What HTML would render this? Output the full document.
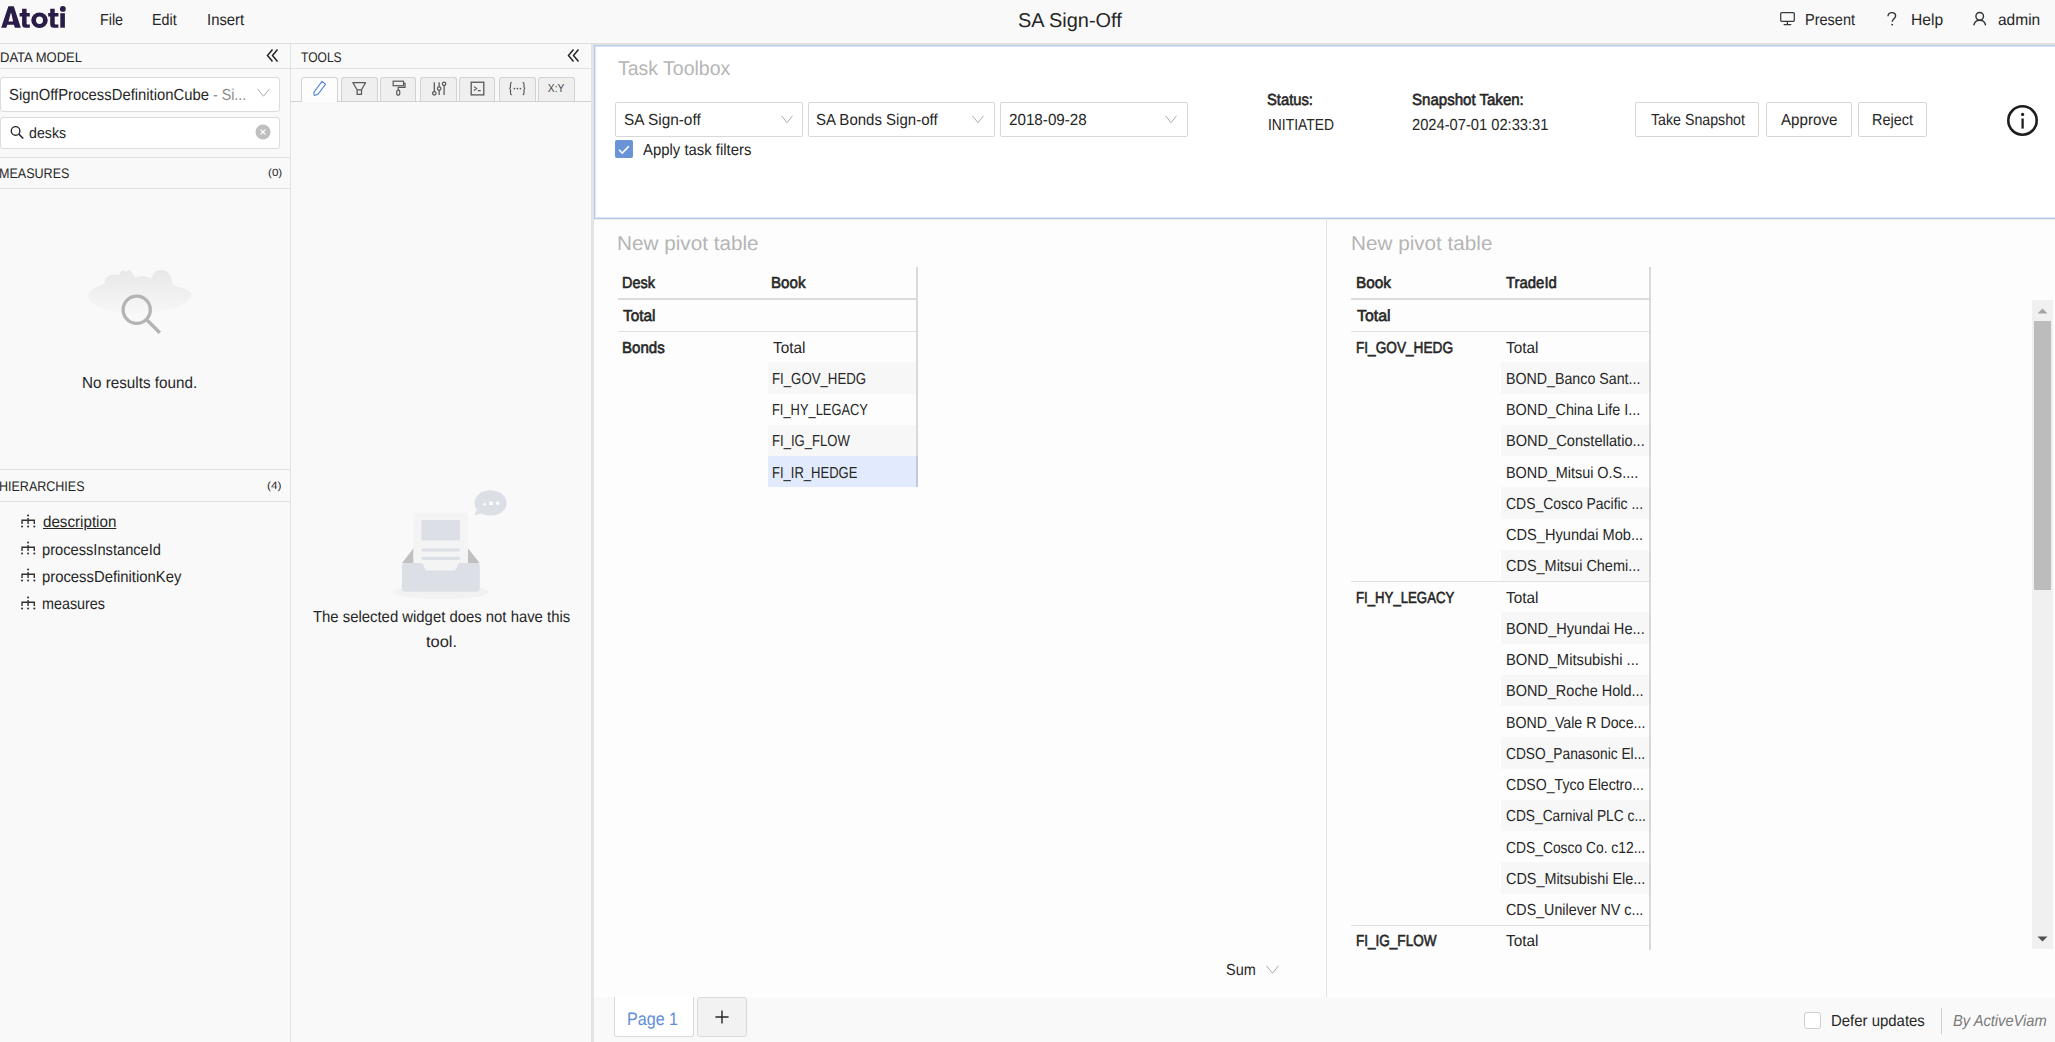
<!DOCTYPE html><html><head><meta charset="utf-8"><style>
html,body{margin:0;padding:0}
body{width:2055px;height:1042px;overflow:hidden;background:#f9f9f9;font-family:"Liberation Sans",sans-serif;position:relative}
.a{position:absolute;display:block}
.t{position:absolute;white-space:nowrap;line-height:20px;transform-origin:0 0;text-rendering:geometricPrecision}
</style></head><body><svg class="a" style="left:0px;top:0px;" width="70" height="32" viewBox="0 0 70 32"><g fill="#291c46" fill-rule="evenodd"><path d="M1.19 27.7L8.35 6.24H13.8L20.8 27.7H15L13.8 24.8H7.3L6.3 27.7ZM8.5 21.6H13.1L11.3 13.2H10.7Z"/><path d="M22.1 8.8H26.6V13.05H29.8V16.6H26.6V23.5Q26.6 24.5 27.6 24.5H29.8V27.7H25.6Q22.1 27.7 22.1 24.2V16.6H19.6V13.05H22.1Z"/><path d="M31.25 20.2A8.25 7.7 0 1 0 47.75 20.2A8.25 7.7 0 1 0 31.25 20.2ZM36 20.3A3.5 3.7 0 1 1 43 20.3A3.5 3.7 0 1 1 36 20.3Z"/><path d="M50.2 8.8H54.7V13.05H58.4V16.6H54.7V23.5Q54.7 24.5 55.7 24.5H58.4V27.7H53.7Q50.2 27.7 50.2 24.2V16.6H48.2V13.05H50.2Z"/><rect x="60.3" y="13.2" width="4.6" height="14.5"/><circle cx="62.85" cy="8.96" r="2.9"/></g></svg>
<div class="a" style="left:0px;top:43px;width:2055px;height:1px;background:#dfdfdf"></div>
<svg class="a" style="left:1778px;top:10px;" width="20" height="18" viewBox="0 0 20 18"><rect x="2.7" y="2.66" width="13.6" height="8.6" rx="1" fill="none" stroke="#3a3a3e" stroke-width="1.25"/><path d="M9.4 11.9V14.3M6.1 14.5H12.8" stroke="#3a3a3e" stroke-width="1.25" stroke-linecap="round" fill="none"/></svg>
<svg class="a" style="left:1884px;top:10px;" width="16" height="18" viewBox="0 0 16 18"><path d="M4 6.2C4 3.9 5.7 2.6 7.8 2.6S11.6 3.9 11.6 6c0 2.6-3.4 2.9-3.4 5.8" stroke="#333" stroke-width="1.4" fill="none"/><circle cx="8.2" cy="14.6" r="0.95" fill="#333"/></svg>
<svg class="a" style="left:1971px;top:10px;" width="18" height="18" viewBox="0 0 18 18"><circle cx="8.7" cy="6.3" r="3.8" fill="none" stroke="#333" stroke-width="1.4"/><path d="M2.8 15.3c0.6-3.2 3-5 5.9-5s5.3 1.8 5.9 5" fill="none" stroke="#333" stroke-width="1.4"/></svg>
<div class="a" style="left:290px;top:44px;width:1px;height:998px;background:#e2e2e2"></div>
<div class="a" style="left:0px;top:68px;width:591px;height:1px;background:#e2e2e2"></div>
<svg class="a" style="left:266px;top:48px;" width="14" height="16" viewBox="0 0 14 16"><path d="M6.5 1.5L1.5 7.5L6.5 13.5M11.5 1.5L6.5 7.5L11.5 13.5" fill="none" stroke="#262626" stroke-width="1.5"/></svg>
<svg class="a" style="left:567px;top:48px;" width="14" height="16" viewBox="0 0 14 16"><path d="M6.5 1.5L1.5 7.5L6.5 13.5M11.5 1.5L6.5 7.5L11.5 13.5" fill="none" stroke="#262626" stroke-width="1.5"/></svg>
<div class="a" style="left:0px;top:77px;width:280px;height:35px;background:#fff;border:1px solid #dcdcdc;border-radius:3px;box-sizing:border-box"></div>
<svg class="a" style="left:257px;top:88px;" width="13" height="9" viewBox="0 0 13 9"><path d="M0.5 0.8L6.5 8.2L12.5 0.8" fill="none" stroke="#ababab" stroke-width="1"/></svg>
<div class="a" style="left:0px;top:117px;width:280px;height:32px;background:#fff;border:1px solid #dcdcdc;border-radius:3px;box-sizing:border-box"></div>
<svg class="a" style="left:10px;top:125px;" width="16" height="16" viewBox="0 0 16 16"><circle cx="5.6" cy="5.9" r="4.3" fill="none" stroke="#262626" stroke-width="1.35"/><path d="M8.8 9.1L13.3 13.5" stroke="#262626" stroke-width="1.5"/></svg>
<svg class="a" style="left:254.5px;top:124px;" width="16" height="16" viewBox="0 0 16 16"><circle cx="8" cy="8" r="7.5" fill="#bfbfbf"/><path d="M5.6 5.6L10.4 10.4M10.4 5.6L5.6 10.4" stroke="#fff" stroke-width="1.3"/></svg>
<div class="a" style="left:0px;top:157px;width:290px;height:1px;background:#e2e2e2"></div>
<div class="a" style="left:0px;top:188px;width:290px;height:1px;background:#e2e2e2"></div>
<svg class="a" style="left:80px;top:260px;" width="120" height="85" viewBox="0 0 120 85"><defs><linearGradient id="cg" x1="0" y1="0" x2="0" y2="1"><stop offset="0" stop-color="#e8e8e8"/><stop offset="1" stop-color="#f7f7f7"/></linearGradient></defs><path d="M8.2 38C7 31 15 27 24.5 23.7C25 19 27 15.5 31 15C35 14.5 38 15 40 14C41 11 42 10 43 10C44 10 45 12 45.7 12.6C46.5 11 47.5 10 49 10C51 10 53 15 55 17C57 18 60 16 63 16C66 16 69 18 71 18C73 13 76 10 80.7 10C86 10 90 13 91.4 18.8C92 22 93 25 94 25.3C98 27 103 28 106 29.4C110 31 111.5 33 111.3 35C111 37 110 39 109.3 39C100 50 75 53 57 53C35 53 12 48 8.2 38Z" fill="url(#cg)"/><circle cx="56.7" cy="49.8" r="13.6" fill="none" stroke="#b4b4b4" stroke-width="3.3"/><path d="M66.5 59.5L79.8 72.8" stroke="#b4b4b4" stroke-width="3.4"/></svg>
<div class="a" style="left:0px;top:469px;width:290px;height:1px;background:#e2e2e2"></div>
<div class="a" style="left:0px;top:501px;width:290px;height:1px;background:#e2e2e2"></div>
<svg class="a" style="left:21.3px;top:513.5px;" width="15" height="14" viewBox="0 0 15 14"><circle cx="7.1" cy="1.5" r="1.05" fill="#333"/><path d="M7.1 3.9V9.9M1.05 9.9V6.3H13.3V9.9" fill="none" stroke="#333" stroke-width="1.4"/><circle cx="1.05" cy="12.5" r="1.05" fill="#333"/><circle cx="7.1" cy="12.5" r="1.05" fill="#333"/><circle cx="13.3" cy="12.5" r="1.05" fill="#333"/></svg>
<svg class="a" style="left:21.3px;top:541.1px;" width="15" height="14" viewBox="0 0 15 14"><circle cx="7.1" cy="1.5" r="1.05" fill="#333"/><path d="M7.1 3.9V9.9M1.05 9.9V6.3H13.3V9.9" fill="none" stroke="#333" stroke-width="1.4"/><circle cx="1.05" cy="12.5" r="1.05" fill="#333"/><circle cx="7.1" cy="12.5" r="1.05" fill="#333"/><circle cx="13.3" cy="12.5" r="1.05" fill="#333"/></svg>
<svg class="a" style="left:21.3px;top:568.3px;" width="15" height="14" viewBox="0 0 15 14"><circle cx="7.1" cy="1.5" r="1.05" fill="#333"/><path d="M7.1 3.9V9.9M1.05 9.9V6.3H13.3V9.9" fill="none" stroke="#333" stroke-width="1.4"/><circle cx="1.05" cy="12.5" r="1.05" fill="#333"/><circle cx="7.1" cy="12.5" r="1.05" fill="#333"/><circle cx="13.3" cy="12.5" r="1.05" fill="#333"/></svg>
<svg class="a" style="left:21.3px;top:595.5px;" width="15" height="14" viewBox="0 0 15 14"><circle cx="7.1" cy="1.5" r="1.05" fill="#333"/><path d="M7.1 3.9V9.9M1.05 9.9V6.3H13.3V9.9" fill="none" stroke="#333" stroke-width="1.4"/><circle cx="1.05" cy="12.5" r="1.05" fill="#333"/><circle cx="7.1" cy="12.5" r="1.05" fill="#333"/><circle cx="13.3" cy="12.5" r="1.05" fill="#333"/></svg>
<div class="a" style="left:291px;top:101px;width:300px;height:1px;background:#d2d2d2"></div>
<div class="a" style="left:301px;top:77px;width:37px;height:25px;background:#fdfdfd;border:1px solid #d2d2d2;border-bottom:none;border-radius:3px 3px 0 0;box-sizing:border-box"></div>
<div class="a" style="left:341px;top:77px;width:37px;height:24px;background:#efefef;border:1px solid #d2d2d2;border-bottom:none;border-radius:3px 3px 0 0;box-sizing:border-box"></div>
<div class="a" style="left:380px;top:77px;width:36px;height:24px;background:#efefef;border:1px solid #d2d2d2;border-bottom:none;border-radius:3px 3px 0 0;box-sizing:border-box"></div>
<div class="a" style="left:420px;top:77px;width:37px;height:24px;background:#efefef;border:1px solid #d2d2d2;border-bottom:none;border-radius:3px 3px 0 0;box-sizing:border-box"></div>
<div class="a" style="left:459px;top:77px;width:36px;height:24px;background:#efefef;border:1px solid #d2d2d2;border-bottom:none;border-radius:3px 3px 0 0;box-sizing:border-box"></div>
<div class="a" style="left:499px;top:77px;width:37px;height:24px;background:#efefef;border:1px solid #d2d2d2;border-bottom:none;border-radius:3px 3px 0 0;box-sizing:border-box"></div>
<div class="a" style="left:538px;top:77px;width:37px;height:24px;background:#efefef;border:1px solid #d2d2d2;border-bottom:none;border-radius:3px 3px 0 0;box-sizing:border-box"></div>
<svg class="a" style="left:309.5px;top:79px;" width="20" height="20" viewBox="0 0 20 20"><path d="M12 2.4L15.6 5.2L8.1 15.1L4.3 16.5L3.8 13.3Z" fill="none" stroke="#5b8ad8" stroke-width="1.15" stroke-linejoin="round"/></svg>
<svg class="a" style="left:349.25px;top:79px;" width="20" height="20" viewBox="0 0 20 20"><path d="M3.9 3.7H16.5L12.5 10.8V15.3H8.1V10.8ZM8.1 10.8H12.5" fill="none" stroke="#5a5656" stroke-width="1.25" stroke-linejoin="round"/></svg>
<svg class="a" style="left:388.5px;top:79px;" width="20" height="20" viewBox="0 0 20 20"><rect x="4.15" y="2.2" width="10.4" height="4.5" fill="none" stroke="#5a5656" stroke-width="1.2"/><path d="M14.55 4.3H16.05V8.4H9.25V11.1" fill="none" stroke="#5a5656" stroke-width="1.2"/><rect x="7.75" y="11.1" width="3" height="5.1" rx="1.4" fill="none" stroke="#5a5656" stroke-width="1.2"/></svg>
<svg class="a" style="left:428.5px;top:79px;" width="20" height="20" viewBox="0 0 20 20"><path d="M5.3 3.2V12.5M10.15 3.2V7.8M10.15 11.3V15.9M15.1 6.6V15.9" stroke="#5a5656" stroke-width="1.25"/><circle cx="5.3" cy="14.3" r="1.75" fill="none" stroke="#5a5656" stroke-width="1.2"/><circle cx="10.15" cy="9.55" r="1.75" fill="none" stroke="#5a5656" stroke-width="1.2"/><circle cx="15.1" cy="4.8" r="1.75" fill="none" stroke="#5a5656" stroke-width="1.2"/></svg>
<svg class="a" style="left:467.0px;top:79px;" width="20" height="20" viewBox="0 0 20 20"><rect x="4.2" y="3.25" width="12.6" height="12.65" fill="none" stroke="#5a5656" stroke-width="1.3"/><path d="M7 7.6L9.7 9.55L7 11.5M10.9 11.6H13.7" fill="none" stroke="#5a5656" stroke-width="1.1"/></svg>
<svg class="a" style="left:507.25px;top:79px;" width="20" height="20" viewBox="0 0 20 20"><path d="M4.8 3.2C3.6 3.4 3.5 4.2 3.5 5.2V7.8C3.5 8.9 3.1 9.4 2.4 9.55C3.1 9.7 3.5 10.2 3.5 11.3V13.9C3.5 14.9 3.6 15.7 4.8 15.9M15.7 3.2C16.9 3.4 17 4.2 17 5.2V7.8C17 8.9 17.4 9.4 18.1 9.55C17.4 9.7 17 10.2 17 11.3V13.9C17 14.9 16.9 15.7 15.7 15.9" fill="none" stroke="#5a5656" stroke-width="1.15"/><circle cx="7.4" cy="9.55" r="0.85" fill="#5a5656"/><circle cx="10.4" cy="9.55" r="0.85" fill="#5a5656"/><circle cx="13.4" cy="9.55" r="0.85" fill="#5a5656"/></svg>
<svg class="a" style="left:546.3px;top:79px;" width="20" height="20" viewBox="0 0 20 20"><text x="10.1" y="13.2" font-size="10.3" text-anchor="middle" fill="#4a4a4a" font-family="Liberation Sans">X:Y</text></svg>
<svg class="a" style="left:388px;top:485px;" width="125" height="120" viewBox="0 0 125 120"><ellipse cx="53" cy="107" rx="48" ry="7" fill="#f2f2f2"/><path d="M13.9 78.2L25.7 63V78.2Z" fill="#c0c0c2"/><path d="M91.8 78.2L79.8 63V78.2Z" fill="#c0c0c2"/><rect x="25.4" y="27.7" width="54.4" height="62" rx="2" fill="#f4f4f5"/><rect x="33.4" y="35" width="38.6" height="20.5" rx="1.5" fill="#dcdfe6"/><rect x="33.4" y="63.6" width="38.6" height="3" rx="1.5" fill="#dcdfe6"/><rect x="33.4" y="71.7" width="38.6" height="3.3" rx="1.5" fill="#dcdfe6"/><path d="M13.9 81C13.9 79 14.9 78 16.9 78H32.4C34.4 78 35.4 79 35.9 81C36.6 84 37.6 85.5 40.4 85.5H64.9C67.7 85.5 68.7 84 69.4 81C69.9 79 70.9 78 72.9 78H88.8C90.8 78 91.8 79 91.8 81V103.7C91.8 105.7 90.3 106.7 88.3 106.7H17.4C15.4 106.7 13.9 105.7 13.9 103.7Z" fill="#dcdfe6"/><ellipse cx="102.6" cy="17.9" rx="16.1" ry="12.7" fill="#dcdfe6"/><path d="M88 25L87 30.5L94 28Z" fill="#dcdfe6"/><path d="M95 20.2L96.7 17.2L98.4 20.2Z" fill="#fff"/><rect x="101.3" y="16.6" width="3.4" height="3.4" fill="#fff"/><circle cx="109.6" cy="18.3" r="1.7" fill="#fff"/></svg>
<div class="a" style="left:591px;top:44px;width:1464px;height:953px;background:#e4e4e4"></div>
<div class="a" style="left:591px;top:997px;width:3px;height:45px;background:#e4e4e4"></div>
<div class="a" style="left:594px;top:45px;width:1461px;height:174px;background:#fff;border:1px solid #b8c7ea;border-right:none;box-sizing:border-box;box-shadow:inset 1px 1px 0 #dde5f6, inset 0 -1px 0 #dde5f6"></div>
<div class="a" style="left:615px;top:102px;width:188px;height:35px;background:#fff;border:1px solid #d8d8d8;border-radius:2px;box-sizing:border-box"></div>
<svg class="a" style="left:781px;top:115px;" width="12" height="8.5" viewBox="0 0 12 8.5"><path d="M0.5 0.8L6.0 7.7L11.5 0.8" fill="none" stroke="#ababab" stroke-width="1"/></svg>
<div class="a" style="left:808px;top:102px;width:187px;height:35px;background:#fff;border:1px solid #d8d8d8;border-radius:2px;box-sizing:border-box"></div>
<svg class="a" style="left:972px;top:115px;" width="12" height="8.5" viewBox="0 0 12 8.5"><path d="M0.5 0.8L6.0 7.7L11.5 0.8" fill="none" stroke="#ababab" stroke-width="1"/></svg>
<div class="a" style="left:1000px;top:102px;width:188px;height:35px;background:#fff;border:1px solid #d8d8d8;border-radius:2px;box-sizing:border-box"></div>
<svg class="a" style="left:1165px;top:115px;" width="12" height="8.5" viewBox="0 0 12 8.5"><path d="M0.5 0.8L6.0 7.7L11.5 0.8" fill="none" stroke="#ababab" stroke-width="1"/></svg>
<div class="a" style="left:615px;top:140px;width:18px;height:18px;background:#6b94d8;border-radius:2px"></div>
<svg class="a" style="left:615px;top:140.5px;" width="18" height="17" viewBox="0 0 18 17"><path d="M4 8.8L7.3 12L13.8 5.2" fill="none" stroke="#fff" stroke-width="1.6"/></svg>
<div class="a" style="left:1635px;top:102px;width:124px;height:35px;background:#fff;border:1px solid #d6d6d6;border-radius:2px;box-sizing:border-box"></div>
<div class="a" style="left:1766px;top:102px;width:86px;height:35px;background:#fff;border:1px solid #d6d6d6;border-radius:2px;box-sizing:border-box"></div>
<div class="a" style="left:1858px;top:102px;width:69px;height:35px;background:#fff;border:1px solid #d6d6d6;border-radius:2px;box-sizing:border-box"></div>
<svg class="a" style="left:2005px;top:104px;" width="34" height="34" viewBox="0 0 34 34"><circle cx="17.5" cy="16.5" r="14.2" fill="none" stroke="#1e1e1e" stroke-width="2.6"/><circle cx="17.6" cy="10.4" r="1.6" fill="#1e1e1e"/><path d="M17.6 14.5V24.6" stroke="#1e1e1e" stroke-width="2.3"/></svg>
<div class="a" style="left:594px;top:220px;width:732px;height:777px;background:#fdfdfd"></div>
<div class="a" style="left:594px;top:219px;width:1461px;height:1px;background:#ececec"></div>
<div class="a" style="left:1326px;top:220px;width:1px;height:777px;background:#e2e2e2"></div>
<div class="a" style="left:1327px;top:220px;width:728px;height:777px;background:#fdfdfd"></div>
<div class="a" style="left:916px;top:267px;width:2px;height:220.3px;background:#d9d9d9"></div>
<div class="a" style="left:618px;top:297.5px;width:298px;height:2.3000000000000114px;background:#dcdcdc"></div>
<div class="a" style="left:618px;top:330.6px;width:298px;height:1.0px;background:#e0e0e0"></div>
<div class="a" style="left:768px;top:362px;width:148px;height:32px;background:#f7f7f7"></div>
<div class="a" style="left:768px;top:425px;width:148px;height:31px;background:#f7f7f7"></div>
<div class="a" style="left:768px;top:456px;width:148px;height:31px;background:#e2ebfd"></div>
<div class="a" style="left:916px;top:456px;width:2px;height:31px;background:#bfcae0"></div>
<div class="a" style="left:1649px;top:267px;width:2px;height:683px;background:#d9d9d9"></div>
<div class="a" style="left:1351px;top:297.5px;width:298px;height:2.3000000000000114px;background:#dcdcdc"></div>
<div class="a" style="left:1351px;top:330.6px;width:298px;height:1.0px;background:#e0e0e0"></div>
<div class="a" style="left:1351px;top:581.25px;width:298px;height:1.0px;background:#e0e0e0"></div>
<div class="a" style="left:1351px;top:925.0px;width:298px;height:1.0px;background:#e0e0e0"></div>
<div class="a" style="left:1501px;top:362px;width:148px;height:32px;background:#f7f7f7"></div>
<div class="a" style="left:1501px;top:425px;width:148px;height:31px;background:#f7f7f7"></div>
<div class="a" style="left:1501px;top:487px;width:148px;height:32px;background:#f7f7f7"></div>
<div class="a" style="left:1501px;top:550px;width:148px;height:31px;background:#f7f7f7"></div>
<div class="a" style="left:1501px;top:612px;width:148px;height:32px;background:#f7f7f7"></div>
<div class="a" style="left:1501px;top:675px;width:148px;height:31px;background:#f7f7f7"></div>
<div class="a" style="left:1501px;top:737px;width:148px;height:32px;background:#f7f7f7"></div>
<div class="a" style="left:1501px;top:800px;width:148px;height:31px;background:#f7f7f7"></div>
<div class="a" style="left:1501px;top:862px;width:148px;height:32px;background:#f7f7f7"></div>
<div class="a" style="left:2032px;top:300px;width:21px;height:649px;background:#f0f0f0"></div>
<div class="a" style="left:2034px;top:321px;width:17px;height:269px;background:#bcbcbc"></div>
<svg class="a" style="left:2036px;top:307px;" width="13" height="8" viewBox="0 0 13 8"><path d="M1.5 6.5L6.5 1.5L11.5 6.5Z" fill="#a3a3a3"/></svg>
<svg class="a" style="left:2036px;top:935px;" width="13" height="8" viewBox="0 0 13 8"><path d="M1.5 1.5L6.5 6.5L11.5 1.5Z" fill="#505050"/></svg>
<svg class="a" style="left:1266px;top:965px;" width="13" height="9" viewBox="0 0 13 9"><path d="M0.5 0.8L6.5 8.2L12.5 0.8" fill="none" stroke="#ababab" stroke-width="1"/></svg>
<div class="a" style="left:594px;top:997px;width:1461px;height:45px;background:#f9f9f9"></div>
<div class="a" style="left:614px;top:997px;width:80px;height:40px;background:#fff;border:1px solid #dadada;border-top:none;border-radius:0 0 3px 3px;box-sizing:border-box"></div>
<div class="a" style="left:697px;top:997px;width:50px;height:40px;background:#f2f2f2;border:1px solid #dadada;border-radius:3px;box-sizing:border-box"></div>
<svg class="a" style="left:713.5px;top:1008.5px;" width="16" height="16" viewBox="0 0 16 16"><path d="M8 1.4V14.6M1.4 8H14.6" stroke="#262626" stroke-width="1.4"/></svg>
<div class="a" style="left:1804px;top:1012px;width:17px;height:17px;background:#fff;border:1px solid #cfcfcf;border-radius:3px;box-sizing:border-box"></div>
<div class="a" style="left:1941px;top:1008px;width:1px;height:26px;background:#cfcfcf"></div>
<div class="t" id="t0" style="left:99.90px;top:11.10px;font-size:16px;color:#262626;transform:scaleX(0.8958);">File</div>
<div class="t" id="t1" style="left:152.41px;top:11.10px;font-size:16px;color:#262626;transform:scaleX(0.8926);">Edit</div>
<div class="t" id="t2" style="left:206.94px;top:11.10px;font-size:16px;color:#262626;transform:scaleX(0.9289);">Insert</div>
<div class="t" id="t3" style="left:1018.00px;top:11.20px;font-size:20px;color:#262626;transform:scaleX(0.9971);">SA Sign-Off</div>
<div class="t" id="t4" style="left:1805.09px;top:10.80px;font-size:16px;color:#262626;transform:scaleX(0.9074);">Present</div>
<div class="t" id="t5" style="left:1910.72px;top:10.80px;font-size:16px;color:#262626;transform:scaleX(0.9774);">Help</div>
<div class="t" id="t6" style="left:1997.73px;top:10.80px;font-size:16px;color:#262626;transform:scaleX(0.9690);">admin</div>
<div class="t" id="t7" style="left:-0.03px;top:47.20px;font-size:14px;color:#262626;transform:scaleX(0.9299);">DATA MODEL</div>
<div class="t" id="t8" style="left:301.14px;top:47.20px;font-size:14px;color:#262626;transform:scaleX(0.8609);">TOOLS</div>
<div class="t" id="t9" style="left:9.07px;top:85.60px;font-size:16px;color:#262626;transform:scaleX(0.9262);">SignOffProcessDefinitionCube</div>
<div class="t" id="t10" style="left:212.91px;top:85.60px;font-size:16px;color:#8c8c8c;transform:scaleX(0.8886);">- Si...</div>
<div class="t" id="t11" style="left:29.35px;top:123.70px;font-size:15px;color:#262626;transform:scaleX(0.9474);">desks</div>
<div class="t" id="t12" style="left:-0.90px;top:162.90px;font-size:14px;color:#262626;transform:scaleX(0.8961);">MEASURES</div>
<div class="t" id="t13" style="left:267.69px;top:163.00px;font-size:10.5px;color:#262626;transform:scaleX(1.1091);">(0)</div>
<div class="t" id="t14" style="left:82.35px;top:373.60px;font-size:16px;color:#262626;transform:scaleX(0.9521);">No results found.</div>
<div class="t" id="t15" style="left:-0.89px;top:475.80px;font-size:14px;color:#262626;transform:scaleX(0.8936);">HIERARCHIES</div>
<div class="t" id="t16" style="left:267.47px;top:475.70px;font-size:10.5px;color:#262626;transform:scaleX(1.1273);">(4)</div>
<div class="t" id="t17" style="left:42.90px;top:513.40px;font-size:16px;color:#262626;transform:scaleX(0.9481);text-decoration:underline;text-underline-offset:1px;">description</div>
<div class="t" id="t18" style="left:41.98px;top:541.00px;font-size:16px;color:#262626;transform:scaleX(0.9164);">processInstanceId</div>
<div class="t" id="t19" style="left:41.97px;top:568.20px;font-size:16px;color:#262626;transform:scaleX(0.9268);">processDefinitionKey</div>
<div class="t" id="t20" style="left:42.00px;top:595.40px;font-size:16px;color:#262626;transform:scaleX(0.8971);">measures</div>
<div class="t" id="t21" style="left:313.20px;top:607.60px;font-size:16px;color:#262626;transform:scaleX(0.9297);">The selected widget does not have this</div>
<div class="t" id="t22" style="left:425.98px;top:632.80px;font-size:16px;color:#262626;transform:scaleX(1.0250);">tool.</div>
<div class="t" id="t23" style="left:618.03px;top:59.00px;font-size:20px;color:#b5b5b5;transform:scaleX(0.9737);">Task Toolbox</div>
<div class="t" id="t24" style="left:624.04px;top:111.40px;font-size:16px;color:#262626;transform:scaleX(0.9615);">SA Sign-off</div>
<div class="t" id="t25" style="left:816.46px;top:111.40px;font-size:16px;color:#262626;transform:scaleX(0.9383);">SA Bonds Sign-off</div>
<div class="t" id="t26" style="left:1009.05px;top:111.40px;font-size:16px;color:#262626;transform:scaleX(0.9500);">2018-09-28</div>
<div class="t" id="t27" style="left:643.00px;top:141.00px;font-size:16px;color:#262626;transform:scaleX(0.9310);">Apply task filters</div>
<div class="t" id="t28" style="left:1267.08px;top:90.80px;font-size:16px;color:#262626;transform:scaleX(0.9229);-webkit-text-stroke:0.6px currentColor;">Status:</div>
<div class="t" id="t29" style="left:1267.57px;top:116.10px;font-size:16px;color:#262626;transform:scaleX(0.8658);">INITIATED</div>
<div class="t" id="t30" style="left:1412.06px;top:90.80px;font-size:16px;color:#262626;transform:scaleX(0.9402);-webkit-text-stroke:0.6px currentColor;">Snapshot Taken:</div>
<div class="t" id="t31" style="left:1412.08px;top:116.10px;font-size:16px;color:#262626;transform:scaleX(0.9184);">2024-07-01 02:33:31</div>
<div class="t" id="t32" style="left:1650.50px;top:110.80px;font-size:16px;color:#262626;transform:scaleX(0.8877);">Take Snapshot</div>
<div class="t" id="t33" style="left:1780.70px;top:110.80px;font-size:16px;color:#262626;transform:scaleX(0.9475);">Approve</div>
<div class="t" id="t34" style="left:1871.80px;top:110.80px;font-size:16px;color:#262626;transform:scaleX(0.9023);">Reject</div>
<div class="t" id="t35" style="left:617.13px;top:233.60px;font-size:20px;color:#b5b5b5;transform:scaleX(1.0358);">New pivot table</div>
<div class="t" id="t36" style="left:622.10px;top:274.00px;font-size:16px;color:#262626;transform:scaleX(0.9028);-webkit-text-stroke:0.6px currentColor;">Desk</div>
<div class="t" id="t37" style="left:771.06px;top:274.00px;font-size:16px;color:#262626;transform:scaleX(0.9444);-webkit-text-stroke:0.6px currentColor;">Book</div>
<div class="t" id="t38" style="left:623.00px;top:307.40px;font-size:16px;color:#262626;transform:scaleX(0.9606);-webkit-text-stroke:0.6px currentColor;">Total</div>
<div class="t" id="t39" style="left:622.06px;top:338.65px;font-size:16px;color:#262626;transform:scaleX(0.9409);-webkit-text-stroke:0.6px currentColor;">Bonds</div>
<div class="t" id="t40" style="left:773.06px;top:338.65px;font-size:16px;color:#262626;transform:scaleX(0.9576);">Total</div>
<div class="t" id="t41" style="left:772.47px;top:369.90px;font-size:16px;color:#262626;transform:scaleX(0.8268);">FI_GOV_HEDG</div>
<div class="t" id="t42" style="left:772.49px;top:401.15px;font-size:16px;color:#262626;transform:scaleX(0.8051);">FI_HY_LEGACY</div>
<div class="t" id="t43" style="left:772.48px;top:432.40px;font-size:16px;color:#262626;transform:scaleX(0.8191);">FI_IG_FLOW</div>
<div class="t" id="t44" style="left:772.49px;top:463.65px;font-size:16px;color:#262626;transform:scaleX(0.8136);">FI_IR_HEDGE</div>
<div class="t" id="t45" style="left:1350.73px;top:233.60px;font-size:20px;color:#b5b5b5;transform:scaleX(1.0343);">New pivot table</div>
<div class="t" id="t46" style="left:1355.54px;top:274.00px;font-size:16px;color:#262626;transform:scaleX(0.9583);-webkit-text-stroke:0.6px currentColor;">Book</div>
<div class="t" id="t47" style="left:1506.00px;top:274.00px;font-size:16px;color:#262626;transform:scaleX(0.9315);-webkit-text-stroke:0.6px currentColor;">TradeId</div>
<div class="t" id="t48" style="left:1356.50px;top:307.40px;font-size:16px;color:#262626;transform:scaleX(0.9939);-webkit-text-stroke:0.6px currentColor;">Total</div>
<div class="t" id="t49" style="left:1355.65px;top:338.65px;font-size:16px;color:#262626;transform:scaleX(0.8527);-webkit-text-stroke:0.6px currentColor;">FI_GOV_HEDG</div>
<div class="t" id="t50" style="left:1506.20px;top:338.65px;font-size:16px;color:#262626;transform:scaleX(0.9576);">Total</div>
<div class="t" id="t51" style="left:1506.31px;top:369.90px;font-size:16px;color:#262626;transform:scaleX(0.8886);">BOND_Banco Sant...</div>
<div class="t" id="t52" style="left:1506.30px;top:401.15px;font-size:16px;color:#262626;transform:scaleX(0.8980);">BOND_China Life I...</div>
<div class="t" id="t53" style="left:1506.29px;top:432.40px;font-size:16px;color:#262626;transform:scaleX(0.9120);">BOND_Constellatio...</div>
<div class="t" id="t54" style="left:1506.30px;top:463.65px;font-size:16px;color:#262626;transform:scaleX(0.9014);">BOND_Mitsui O.S....</div>
<div class="t" id="t55" style="left:1506.33px;top:494.90px;font-size:16px;color:#262626;transform:scaleX(0.8710);">CDS_Cosco Pacific ...</div>
<div class="t" id="t56" style="left:1506.29px;top:526.15px;font-size:16px;color:#262626;transform:scaleX(0.9122);">CDS_Hyundai Mob...</div>
<div class="t" id="t57" style="left:1506.30px;top:557.40px;font-size:16px;color:#262626;transform:scaleX(0.9041);">CDS_Mitsui Chemi...</div>
<div class="t" id="t58" style="left:1355.68px;top:588.65px;font-size:16px;color:#262626;transform:scaleX(0.8246);-webkit-text-stroke:0.6px currentColor;">FI_HY_LEGACY</div>
<div class="t" id="t59" style="left:1506.20px;top:588.65px;font-size:16px;color:#262626;transform:scaleX(0.9576);">Total</div>
<div class="t" id="t60" style="left:1506.29px;top:619.90px;font-size:16px;color:#262626;transform:scaleX(0.9120);">BOND_Hyundai He...</div>
<div class="t" id="t61" style="left:1506.28px;top:651.15px;font-size:16px;color:#262626;transform:scaleX(0.9225);">BOND_Mitsubishi ...</div>
<div class="t" id="t62" style="left:1506.30px;top:682.40px;font-size:16px;color:#262626;transform:scaleX(0.9047);">BOND_Roche Hold...</div>
<div class="t" id="t63" style="left:1506.31px;top:713.65px;font-size:16px;color:#262626;transform:scaleX(0.8871);">BOND_Vale R Doce...</div>
<div class="t" id="t64" style="left:1506.34px;top:744.90px;font-size:16px;color:#262626;transform:scaleX(0.8594);">CDSO_Panasonic El...</div>
<div class="t" id="t65" style="left:1506.32px;top:776.15px;font-size:16px;color:#262626;transform:scaleX(0.8812);">CDSO_Tyco Electro...</div>
<div class="t" id="t66" style="left:1506.34px;top:807.40px;font-size:16px;color:#262626;transform:scaleX(0.8594);">CDS_Carnival PLC c...</div>
<div class="t" id="t67" style="left:1506.34px;top:838.65px;font-size:16px;color:#262626;transform:scaleX(0.8648);">CDS_Cosco Co. c12...</div>
<div class="t" id="t68" style="left:1506.30px;top:869.90px;font-size:16px;color:#262626;transform:scaleX(0.9000);">CDS_Mitsubishi Ele...</div>
<div class="t" id="t69" style="left:1506.31px;top:901.15px;font-size:16px;color:#262626;transform:scaleX(0.8928);">CDS_Unilever NV c...</div>
<div class="t" id="t70" style="left:1355.65px;top:932.40px;font-size:16px;color:#262626;transform:scaleX(0.8457);-webkit-text-stroke:0.6px currentColor;">FI_IG_FLOW</div>
<div class="t" id="t71" style="left:1506.20px;top:932.40px;font-size:16px;color:#262626;transform:scaleX(0.9576);">Total</div>
<div class="t" id="t72" style="left:1226.10px;top:960.50px;font-size:16px;color:#262626;transform:scaleX(0.9032);">Sum</div>
<div class="t" id="t73" style="left:627.41px;top:1009.00px;font-size:18px;color:#5f8fd8;transform:scaleX(0.8944);">Page 1</div>
<div class="t" id="t74" style="left:1830.67px;top:1012.00px;font-size:16px;color:#262626;transform:scaleX(0.9333);">Defer updates</div>
<div class="t" id="t75" style="left:1953.48px;top:1012.00px;font-size:16px;color:#7a7a7a;font-style:italic;transform:scaleX(0.9168);">By ActiveViam</div></body></html>
